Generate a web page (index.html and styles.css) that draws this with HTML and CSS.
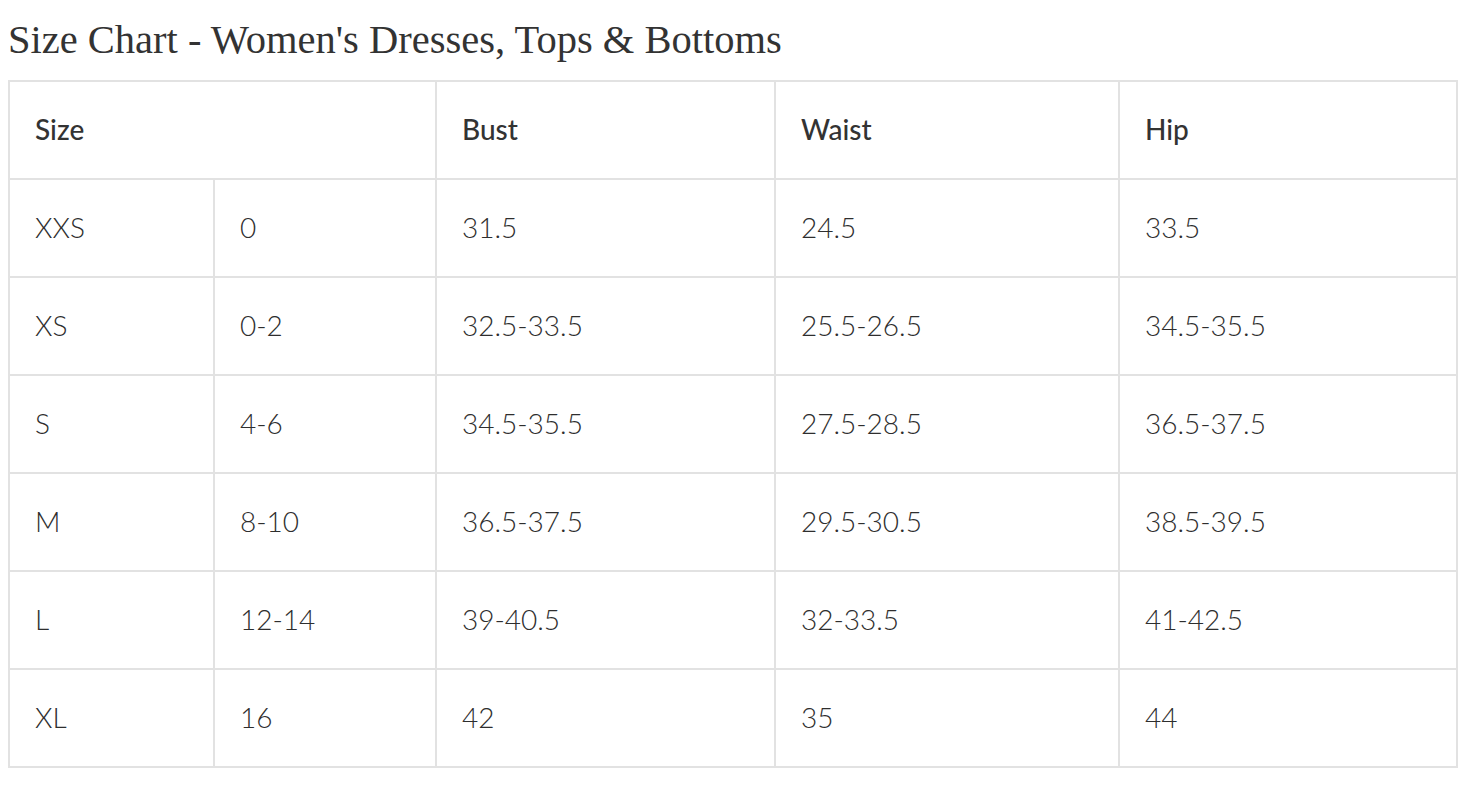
FILE: index.html
```html
<!DOCTYPE html>
<html>
<head>
<meta charset="utf-8">
<link rel="stylesheet" href="styles.css">
</head>
<body>
<h2 class="title">Size Chart - Women's Dresses, Tops &amp; Bottoms</h2>
<table class="chart">
<colgroup>
<col class="c1"><col class="c2"><col class="c3"><col class="c4"><col class="c5">
</colgroup>
<thead>
<tr><th colspan="2">Size</th><th>Bust</th><th>Waist</th><th>Hip</th></tr>
</thead>
<tbody>
<tr><td>XXS</td><td>0</td><td>31.5</td><td>24.5</td><td>33.5</td></tr>
<tr><td>XS</td><td>0-2</td><td>32.5-33.5</td><td>25.5-26.5</td><td>34.5-35.5</td></tr>
<tr><td>S</td><td>4-6</td><td>34.5-35.5</td><td>27.5-28.5</td><td>36.5-37.5</td></tr>
<tr><td>M</td><td>8-10</td><td>36.5-37.5</td><td>29.5-30.5</td><td>38.5-39.5</td></tr>
<tr><td>L</td><td>12-14</td><td>39-40.5</td><td>32-33.5</td><td>41-42.5</td></tr>
<tr><td>XL</td><td>16</td><td>42</td><td>35</td><td>44</td></tr>
</tbody>
</table>
</body>
</html>
```
FILE: styles.css
```css
body {
  margin: 0;
  padding: 0 8px;
  background: #fff;
  color: #333;
}
.title {
  font-family: "Liberation Serif", serif;
  font-weight: normal;
  font-size: 40.5px;
  line-height: 44px;
  margin: 18px 0 18px 0;
  color: #333;
}
.chart {
  border-collapse: collapse;
  width: 1448px;
  table-layout: fixed;
  font-family: Lato, "Liberation Sans", sans-serif;
  font-size: 28px;
  color: #333;
}
.c1 { width: 205px; }
.c2 { width: 222px; }
.c3 { width: 339px; }
.c4 { width: 344px; }
.c5 { width: 338px; }
.chart th, .chart td {
  border: 2px solid #e2e2e2;
  padding: 0 0 3px 25px;
  height: 93px;
  text-align: left;
  vertical-align: middle;
}
.chart td {
  font-weight: 300;
  color: #2e2e2e;
}
.chart th {
  font-weight: 500;
}
```
